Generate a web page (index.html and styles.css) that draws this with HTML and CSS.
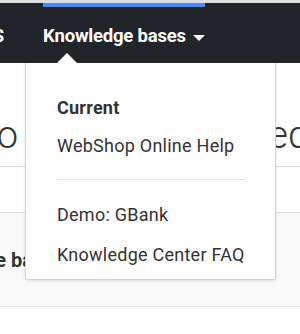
FILE: index.html
```
<!DOCTYPE html>
<html lang="en">

<head>
    <meta charset="UTF-8" />
    <meta name="viewport" content="width=device-width, initial-scale=1.0" />
    <title>Knowledge Center</title>
    <link rel="stylesheet" href="styles.css">
</head>

<body>
    <div class="page">
        <div class="top-strip"></div>
        <nav class="navbar">
            <div class="nav-item nav-item-prev"><span>TOPICS</span></div>
            <div class="nav-item active">
                <span>Knowledge bases</span>
                <span class="caret"></span>

                <!-- Knowledge base switcher -->
                <div class="dropdown">
                    <div class="dropdown-arrow"></div>
                    <div class="dropdown-header">Current</div>
                    <div class="dropdown-link">WebShop Online Help</div>
                    <div class="dropdown-divider"></div>
                    <div class="dropdown-link">Demo: GBank</div>
                    <div class="dropdown-link">Knowledge Center FAQ</div>
                </div>
            </div>
        </nav>

        <section class="hero">
            <div class="hero-left"><span>Hello</span></div>
            <div class="hero-right"><span>Get started</span></div>
        </section>

        <div class="spacer"></div>

        <section class="band">
            <div class="band-title"><span>Knowledge ba</span></div>
        </section>
    </div>
</body>

</html>
```

FILE: styles.css
```
* {
    box-sizing: border-box;
    margin: 0;
    padding: 0;
}

body {
    font-family: 'Roboto', 'Liberation Sans', sans-serif;
    background-color: #ffffff;
    color: #333333;
    overflow: hidden;
}

.page {
    width: 300px;
    overflow: hidden;
}

.top-strip {
    height: 3px;
    background-color: #dedede;
}

/* Navigation bar */
.navbar {
    height: 60px;
    background-color: #212429;
    display: flex;
    gap: 39px;
    position: relative;
    z-index: 2;
}

.nav-item {
    height: 60px;
    padding-top: 23px;
    line-height: 20px;
    font-size: 18.5px;
    font-weight: 700;
    letter-spacing: -0.2px;
    color: #ffffff;
    display: flex;
    align-items: flex-start;
    position: relative;
    white-space: nowrap;
}

.nav-item-prev {
    width: 4px;
    justify-content: flex-end;
}

.nav-item.active {
    border-top: 4px solid #4a8af4;
    padding-top: 19px;
}

.caret {
    width: 0;
    height: 0;
    margin: 9px 0 0 7px;
    border-left: 6px solid transparent;
    border-right: 6px solid transparent;
    border-top: 6px solid #ffffff;
}

/* Dropdown */
.dropdown {
    position: absolute;
    top: 56px;
    left: -18px;
    width: 251px;
    padding: 27px 30px 4px 31px;
    background-color: #ffffff;
    border: 1px solid #d3d3d3;
    border-top: none;
    border-radius: 0 0 2px 2px;
    box-shadow: 0 1px 3px rgba(0, 0, 0, 0.12);
    font-size: 18px;
    font-weight: 400;
    letter-spacing: 0.25px;
    color: #333333;
}

.dropdown-arrow {
    position: absolute;
    top: -10px;
    left: 31px;
    width: 0;
    height: 0;
    border-left: 10px solid transparent;
    border-right: 10px solid transparent;
    border-bottom: 10px solid #ffffff;
}

.dropdown-header {
    font-weight: 700;
    line-height: 36px;
}

.dropdown-link {
    line-height: 40px;
}

.dropdown-divider {
    height: 1px;
    background-color: #dfe2e6;
    margin: 13px 0 15px;
}

/* Page content behind the menu */
.hero {
    height: 104px;
    padding-top: 53px;
    border-bottom: 1px solid #d6dae1;
    display: flex;
    justify-content: space-between;
    font-size: 38px;
    font-weight: 300;
    line-height: 38px;
    color: #333333;
    white-space: nowrap;
}

.hero-left {
    width: 18px;
    display: flex;
    justify-content: flex-end;
}

.hero-right {
    width: 42px;
    margin-right: -9px;
    display: flex;
    justify-content: flex-end;
}

.spacer {
    height: 46px;
    border-bottom: 1px solid #d6dae1;
}

.band {
    height: 94px;
    background-color: #fafafa;
    border-bottom: 1px solid #e6e6e6;
    display: flex;
    align-items: center;
}

.band-title {
    width: 33px;
    display: flex;
    justify-content: flex-end;
    font-size: 20px;
    font-weight: 700;
    white-space: nowrap;
}
```
